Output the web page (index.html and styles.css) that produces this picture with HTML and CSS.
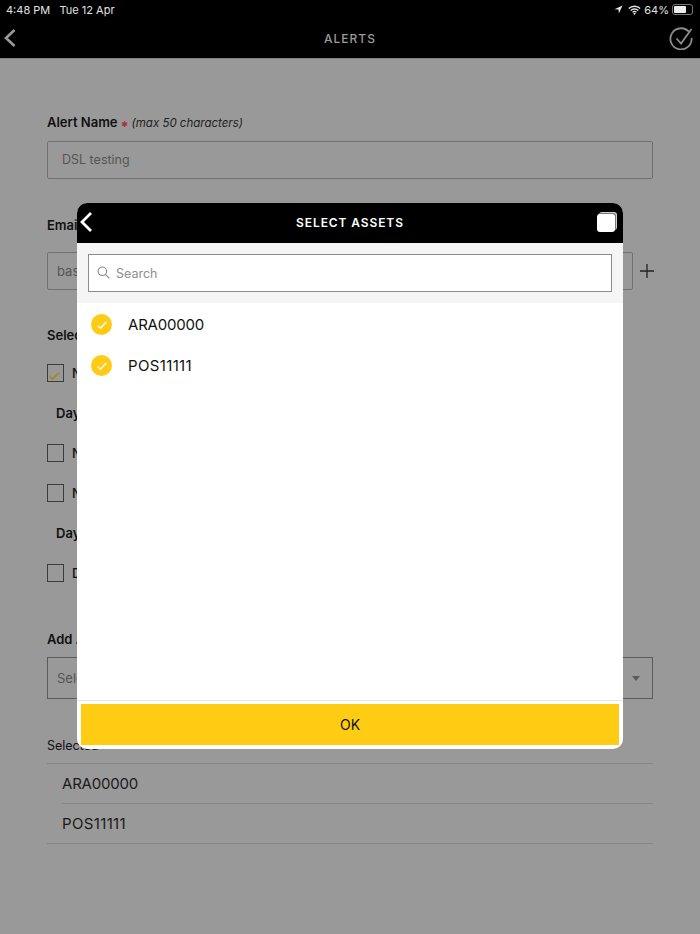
FILE: index.html
```html
<!DOCTYPE html>
<html lang="en">
<head>
<meta charset="utf-8">
<title>Alerts</title>
<link rel="stylesheet" href="styles.css">
</head>
<body>
<div class="app">
  <header class="topbar">
    <div class="status">
      <span class="status-left">4:48 PM&nbsp;&nbsp;&nbsp;Tue 12 Apr</span>
      <span class="status-right">
        <svg class="ic-loc" viewBox="0 0 10 10" width="9" height="9"><path d="M9.500.5 0.500 4.600 5 5l.4 4.500z" fill="#e6e6e6"/></svg>
        <svg class="ic-wifi" viewBox="0 0 16 12" width="13" height="10"><path d="M1 4.200a10 10 0 0 1 14 0M3.300 6.600a6.800 6.800 0 0 1 9.400 0M5.600 8.900a3.400 3.400 0 0 1 4.800 0" fill="none" stroke="#e6e6e6" stroke-width="1.700"/><path d="M8 12 6.400 10.200a2.400 2.400 0 0 1 3.200 0z" fill="#e6e6e6"/></svg>
        <span class="pct">64%</span>
        <span class="battery"><span class="battery-fill"></span></span>
      </span>
    </div>
    <div class="navbar">
      <svg class="nav-back" viewBox="0 0 14 20" width="14" height="20"><path d="M11.500 2 3 10l8.500 8" fill="none" stroke="#999" stroke-width="2.600"/></svg>
      <span class="nav-title">ALERTS</span>
      <svg class="nav-check" viewBox="0 0 24 24" width="24" height="24"><path d="M20.300 6.200A10.600 10.600 0 1 0 22.600 12" fill="none" stroke="#8c8c8c" stroke-width="1.800"/><path d="M7.500 12.500l4.500 5L22.500 3" fill="none" stroke="#8c8c8c" stroke-width="1.800"/></svg>
    </div>
  </header>

  <main class="form">
    <div class="label label-first"><b>Alert Name</b> <span class="req">✱</span> <i>(max 50 characters)</i></div>
    <div class="input">DSL testing</div>

    <div class="label label-email"><b>Email</b></div>
    <div class="email-row">
      <div class="input input-grow">bas</div>
      <svg class="plus" viewBox="0 0 14 14" width="14" height="14"><path d="M7 0v14M0 7h14" stroke="#222" stroke-width="1.300"/></svg>
    </div>

    <div class="label label-select"><b>Select</b></div>
    <div class="opt opt-first"><span class="box"><svg viewBox="0 0 16 16" width="16" height="16"><path d="M3 11.500l2.500 2.500L12.500 7.500" fill="none" stroke="#a8860f" stroke-width="1.700"/></svg></span><span class="opt-text">N</span></div>
    <div class="day day-one"><b>Day</b></div>
    <div class="opt opt-a"><span class="box"></span><span class="opt-text">N</span></div>
    <div class="opt opt-b"><span class="box"></span><span class="opt-text">N</span></div>
    <div class="day day-two"><b>Day</b></div>
    <div class="opt opt-c"><span class="box"></span><span class="opt-text">D</span></div>

    <div class="label label-add"><b>Add Assets</b></div>
    <div class="select"><span>Select</span><span class="caret"></span></div>
    <div class="selected-label">Selected</div>
    <ul class="assets">
      <li class="code-a">ARA00000</li>
      <li class="code-p">POS11111</li>
    </ul>
  </main>

  <section class="modal">
    <div class="modal-head">
      <svg class="modal-back" viewBox="0 0 14 22" width="14" height="22"><path d="M12 2 3 11l9 9" fill="none" stroke="#fff" stroke-width="2.800"/></svg>
      <span class="modal-title">SELECT ASSETS</span>
      <span class="copy"></span>
    </div>
    <div class="search-wrap">
      <div class="search">
        <svg viewBox="0 0 14 14" width="13" height="13"><circle cx="5.700" cy="5.700" r="4.600" fill="none" stroke="#8a8a8a" stroke-width="1.200"/><path d="M9 9l4.300 4.300" stroke="#8a8a8a" stroke-width="1.200"/></svg>
        <span>Search</span>
      </div>
    </div>
    <div class="modal-list">
      <div class="row code-a"><span class="tick"><svg viewBox="0 0 12 12" width="12" height="12"><path d="M1.500 6.500l3 2.700L10.500 2.800" fill="none" stroke="#fff" stroke-width="1.300"/></svg></span>ARA00000</div>
      <div class="row code-p"><span class="tick"><svg viewBox="0 0 12 12" width="12" height="12"><path d="M1.500 6.500l3 2.700L10.500 2.800" fill="none" stroke="#fff" stroke-width="1.300"/></svg></span>POS11111</div>
    </div>
    <div class="modal-foot"><div class="ok">OK</div></div>
  </section>
</div>
</body>
</html>
```
FILE: styles.css
```css
* { box-sizing: border-box; }
html, body { margin: 0; padding: 0; }
body { font-family: Inter, "Liberation Sans", sans-serif; color: #111; }
.app { position: relative; width: 700px; height: 934px; background: #999; overflow: hidden; }

.topbar { height: 59px; background: #000; border-bottom: 1px solid #808080; }
.status { height: 19px; padding: 0 7px 0 6px; display: flex; justify-content: space-between; align-items: center; font-size: 11px; color: #e0e0e0; }
.status-right { display: flex; align-items: center; gap: 3px; font-size: 11px; }
.ic-loc { margin-right: 2px; }
.battery { width: 21px; height: 11px; border: 1px solid #777; border-radius: 3px; padding: 1px; }
.battery-fill { display: block; width: 12px; height: 7px; background: #eee; border-radius: 1px; }
.navbar { height: 38px; position: relative; display: flex; align-items: center; justify-content: space-between; padding: 0 7px 0 3px; }
.nav-title { position: absolute; left: 0; right: 0; text-align: center; font-size: 12px; font-weight: 500; letter-spacing: 1px; color: #9a9a9a; }

.form { padding: 0 47px; }
.label { font-size: 13px; line-height: 16px; height: 16px; color: #111; }
.label b { font-weight: 600; }
.label i { font-size: 11.500px; color: #222; }
.req { color: #a83232; font-size: 8px; font-family: "DejaVu Sans", sans-serif; }
.label-first { margin-top: 55px; }
.input { margin-top: 11px; height: 38px; border: 1px solid #707070; border-radius: 2px; padding: 0 14px; font-size: 12.500px; line-height: 36px; color: #555; }
.label-email { margin-top: 38px; }
.email-row { display: flex; align-items: center; gap: 7px; margin-top: 19px; }
.input-grow { flex: 1; margin-top: 0; padding: 0 9px; font-size: 13px; }
.plus { flex: none; margin-right: -1px; }
.label-select { margin-top: 37px; }
.opt { display: flex; align-items: center; gap: 8px; height: 18px; }
.opt-first { margin-top: 21px; }
.box { width: 17px; height: 18px; border: 1.500px solid #3c3c3c; display: block; flex: none; overflow: hidden; }
.box svg { display: block; margin: 0 0 0 -1px; }
.opt-text { font-size: 13px; font-weight: 500; }
.day { font-size: 13px; line-height: 16px; margin-left: 9px; }
.day b { font-weight: 600; }
.day-one { margin-top: 23px; }
.opt-a { margin-top: 23px; }
.opt-b { margin-top: 22px; }
.day-two { margin-top: 23px; }
.opt-c { margin-top: 23px; }
.label-add { margin-top: 49px; }
.select { margin-top: 10px; height: 42px; border: 1px solid #5c5c5c; display: flex; align-items: center; justify-content: space-between; padding: 0 12px 0 9px; font-size: 13px; color: #555; }
.caret { width: 0; height: 0; border-left: 4.500px solid transparent; border-right: 4.500px solid transparent; border-top: 5px solid #5c5c5c; }
.selected-label { margin-top: 39px; font-size: 12.500px; line-height: 16px; }
.assets { list-style: none; margin: 9px 0 0; padding: 0; border-top: 1px solid #858585; }
.assets li { height: 40px; line-height: 39px; margin-left: 15px; font-size: 15px; color: #1a1a1a; border-bottom: 1px solid #858585; }
.assets li:last-child { padding-left: 15px; margin-left: 0; }
.code-a { letter-spacing: -0.2px; }
.code-p { letter-spacing: 0.35px; }

.modal { position: absolute; left: 77px; top: 203px; width: 546px; height: 546px; background: #fff; border-radius: 10px; overflow: hidden; display: flex; flex-direction: column; }
.modal-head { height: 40px; background: #000; position: relative; display: flex; align-items: center; justify-content: center; flex: none; padding-bottom: 2px; }
.modal-back { position: absolute; left: 2px; top: 8px; }
.modal-title { color: #fff; font-size: 12px; font-weight: 600; letter-spacing: 0.9px; }
.copy { position: absolute; right: 8px; top: 11px; width: 18px; height: 18px; background: #fff; border-radius: 3px; box-shadow: 1px -1px 0 #777, 2px -2px 0 #d0d0d0; }
.search-wrap { background: #f5f5f5; padding: 11px 11px; height: 60px; flex: none; }
.search { height: 38px; background: #fff; border: 1.500px solid #8c8c8c; display: flex; align-items: center; gap: 6px; padding: 0 8px; font-size: 12.500px; color: #8e8e8e; }
.search svg { margin-top: -1px; }
.modal-list { flex: 1; padding-top: 1px; }
.row { height: 41px; display: flex; align-items: center; gap: 16px; padding-left: 14px; font-size: 15px; color: #111; }
.tick { width: 21px; height: 21px; border-radius: 50%; background: #fecc17; display: flex; align-items: center; justify-content: center; flex: none; }
.modal-foot { border-top: 1px solid #e6e6e6; padding: 3px 4px 4px; flex: none; }
.ok { height: 41px; background: #fecc12; display: flex; align-items: center; justify-content: center; font-size: 14px; color: #111; }
```
